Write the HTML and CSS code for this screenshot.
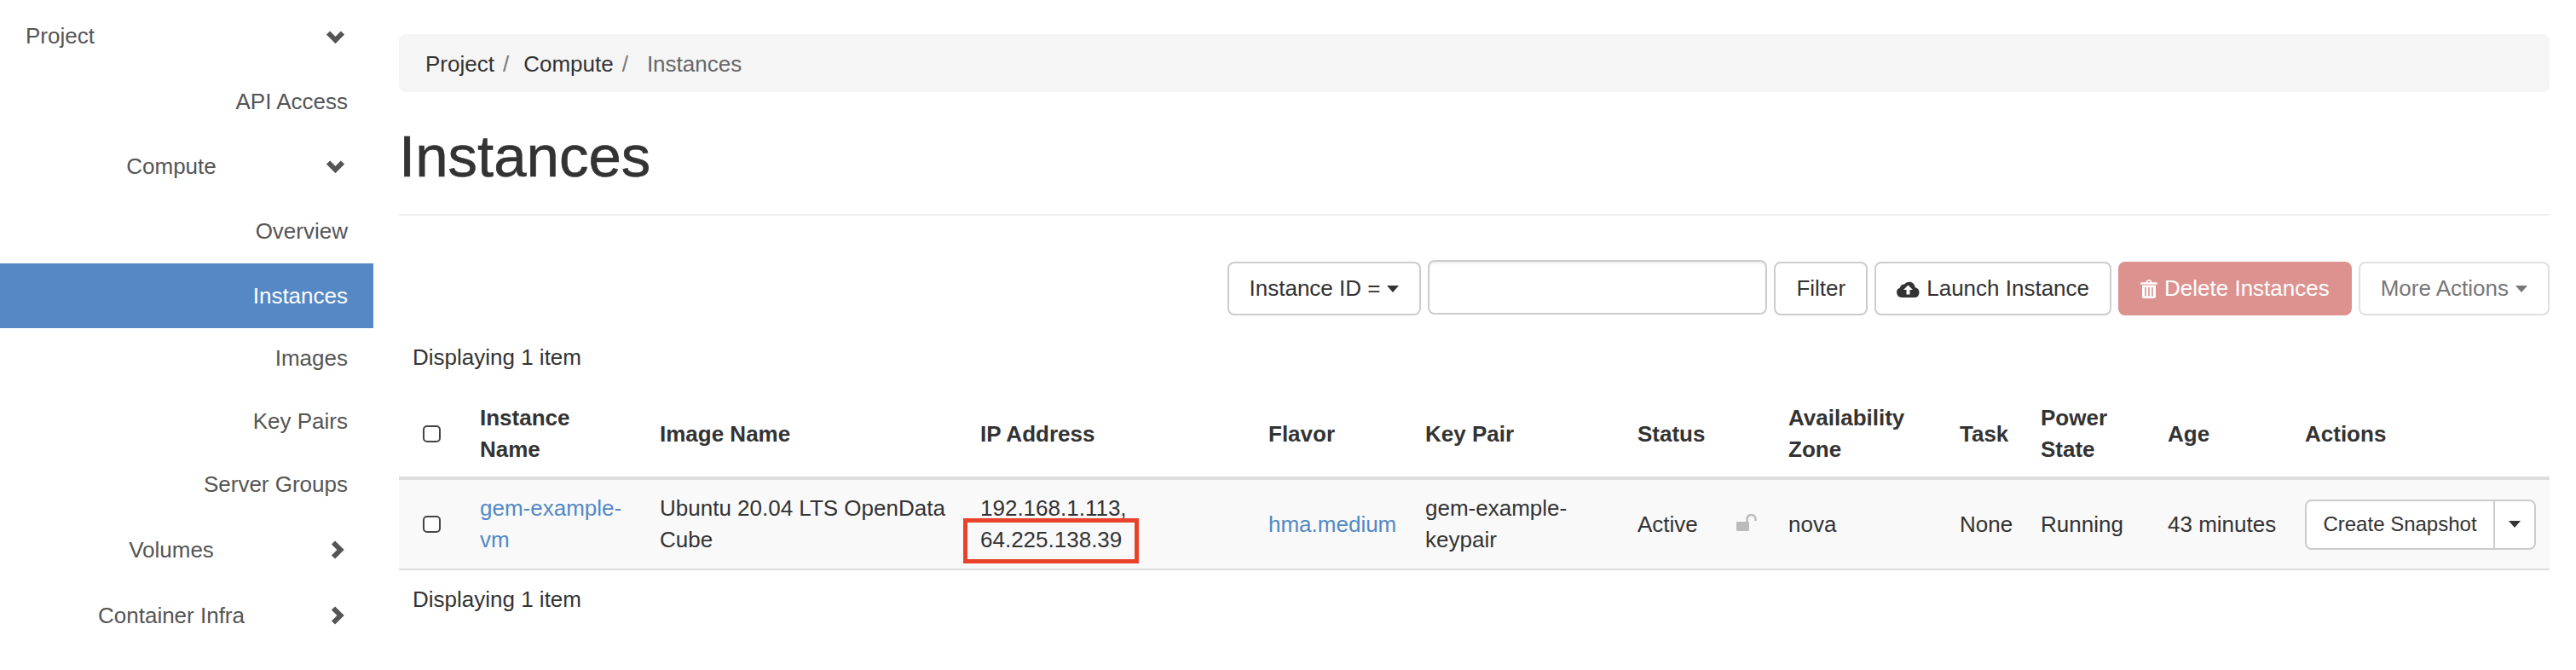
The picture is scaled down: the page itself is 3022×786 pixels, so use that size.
FILE: index.html
```html
<!DOCTYPE html>
<html lang="en">
<head>
    <meta charset="utf-8">
    <title>Instances</title>
    <link rel="stylesheet" href="styles.css">
</head>
<body>
    <div class="page">
        <nav class="sidebar">
            <a class="nav-item nav-top"><span class="nav-label">Project</span>
                <svg class="chev" viewBox="0 0 23 16"><path d="M3 3.500l8.500 8.500 8.500-8.500"/></svg></a>
            <a class="nav-item nav-end">API Access</a>
            <a class="nav-item nav-group"><span class="nav-label">Compute</span>
                <svg class="chev" viewBox="0 0 23 16"><path d="M3 3.500l8.500 8.500 8.500-8.500"/></svg></a>
            <a class="nav-item nav-end">Overview</a>
            <a class="nav-item nav-end active">Instances</a>
            <a class="nav-item nav-end nav-short">Images</a>
            <a class="nav-item nav-end nav-short">Key Pairs</a>
            <a class="nav-item nav-end nav-short">Server Groups</a>
            <a class="nav-item nav-group nav-volumes"><span class="nav-label">Volumes</span>
                <svg class="chev" viewBox="0 0 23 24"><path d="M9 3.500l8.500 8.500-8.500 8.500"/></svg></a>
            <a class="nav-item nav-group nav-container"><span class="nav-label">Container Infra</span>
                <svg class="chev" viewBox="0 0 23 24"><path d="M9 3.500l8.500 8.500-8.500 8.500"/></svg></a>
        </nav>

        <main class="content">
            <ol class="breadcrumb">
                <li>Project</li>
                <li class="sep sep-first">/</li>
                <li>Compute</li>
                <li class="sep sep-last">/</li>
                <li class="current">Instances</li>
            </ol>

            <h1 class="page-title">Instances</h1>

            <div class="toolbar">
                <button class="btn">Instance ID =<span class="caret"></span></button>
                <input class="filter-input" type="text">
                <button class="btn">Filter</button>
                <button class="btn">
                    <svg class="icon-cloud" viewBox="0 0 27 21"><path fill-rule="evenodd" d="M6 21a6 6 0 0 1-2-11.600A5 5 0 0 1 9 5.500A7 7 0 0 1 21.300 7.500a3.200 3.200 0 0 1 .4 1.700A6 6 0 0 1 21.500 21ZM13.500 6.500L19 12H15.500V17.500H11.500V12H8Z"/></svg>
                    Launch Instance</button>
                <button class="btn btn-danger">
                    <svg class="icon-trash" viewBox="0 0 20 22"><path fill-rule="evenodd" d="M1 3.200H6.200L7.600.8Q8 .2 8.800 .2H11.200Q12 .2 12.400 .8L13.800 3.200H19Q20 3.200 20 4V5.500H0V4Q0 3.200 1 3.200ZM8.200 3.200H11.800L11 1.800H9ZM2 6.500H18V20Q18 22 16 22H4Q2 22 2 20ZM5.200 9V19.500H6.800V9ZM9.200 9V19.500H10.800V9ZM13.200 9V19.500H14.800V9Z"/></svg>
                    Delete Instances</button>
                <button class="btn btn-muted">More Actions<span class="caret"></span></button>
            </div>

            <p class="item-count first">Displaying 1 item</p>

            <table class="instances">
                <colgroup>
                    <col class="c-check"><col class="c-name"><col class="c-image"><col class="c-ip">
                    <col class="c-flavor"><col class="c-key"><col class="c-status"><col class="c-zone">
                    <col class="c-task"><col class="c-power"><col class="c-age"><col class="c-actions">
                </colgroup>
                <thead>
                    <tr>
                        <th><span class="checkbox"></span></th>
                        <th>Instance Name</th>
                        <th>Image Name</th>
                        <th>IP Address</th>
                        <th>Flavor</th>
                        <th>Key Pair</th>
                        <th>Status</th>
                        <th>Availability Zone</th>
                        <th>Task</th>
                        <th>Power State</th>
                        <th>Age</th>
                        <th>Actions</th>
                    </tr>
                </thead>
                <tbody>
                    <tr>
                        <td><span class="checkbox"></span></td>
                        <td><a class="link">gem-example-vm</a></td>
                        <td>Ubuntu 20.04 LTS OpenData Cube</td>
                        <td class="ip-cell">192.168.1.113,<br>64.225.138.39<span class="callout"></span></td>
                        <td><a class="link">hma.medium</a></td>
                        <td>gem-example-keypair</td>
                        <td>
                            <div class="status">Active
                                <svg class="icon-lock" viewBox="0 0 25 20"><rect y="9" width="15" height="11" rx="1"/><path d="M12.500 9V6a5 5 0 0 1 10 0v2"/></svg>
                            </div>
                        </td>
                        <td>nova</td>
                        <td>None</td>
                        <td>Running</td>
                        <td class="nowrap">43 minutes</td>
                        <td>
                            <div class="btn-group">
                                <button class="btn-sm btn-main">Create Snapshot</button>
                                <button class="btn-sm btn-split"><span class="caret"></span></button>
                            </div>
                        </td>
                    </tr>
                </tbody>
            </table>

            <p class="item-count last">Displaying 1 item</p>
        </main>
    </div>
</body>
</html>
```

FILE: styles.css
```css
* {
    box-sizing: border-box;
}

html, body {
    height: 100%;
}

body {
    margin: 0;
    background: #fff;
    color: #333;
    font-family: "Liberation Sans", Arial, sans-serif;
    font-size: 26px;
    line-height: 37px;
    overflow: hidden;
}

.page {
    display: flex;
    height: 100%;
    border-top: 4px solid;
    border-image: linear-gradient(#fff 25%, #ccc 25%) 1;
}

/* sidebar */
.sidebar {
    width: 438px;
    flex-shrink: 0;
    color: #555;
}

.nav-item {
    display: flex;
    align-items: center;
    height: 76px;
    padding: 0 30px;
}

.nav-top {
    height: 77px;
}

.nav-end {
    justify-content: flex-end;
}

.nav-short {
    height: 74px;
}

.nav-group .nav-label {
    flex: 1;
    text-align: center;
}

.nav-top .nav-label {
    flex: 1;
}

.nav-volumes {
    margin-top: 2px;
}

.nav-container {
    margin-top: 1px;
}

.active {
    margin-bottom: -2px;
    background: #5588c4;
    color: #fff;
}

.chev {
    width: 23px;
    margin-left: 10px;
    margin-right: 3px;
    flex-shrink: 0;
    fill: none;
    stroke: #555;
    stroke-width: 6;
}

/* main column */
.content {
    flex: 1;
    min-width: 0;
    padding: 36px 31px 0 30px;
}

.breadcrumb {
    display: flex;
    align-items: center;
    height: 68px;
    margin: 0;
    padding: 3px 31px 0;
    list-style: none;
    background: #f5f5f5;
    border-radius: 8px;
}

.sep {
    margin-left: 10px;
    color: #777;
}

.sep-first {
    margin-right: 17px;
}

.sep-last {
    margin-right: 22px;
}

.current {
    color: #666;
}

.page-title {
    height: 145px;
    margin: 0;
    padding-top: 39px;
    border-bottom: 2px solid #eee;
    font-size: 69px;
    line-height: 74px;
    font-weight: 500;
    -webkit-text-stroke: .6px #333;
}

.toolbar {
    display: flex;
    justify-content: flex-end;
    align-items: center;
    gap: 8px;
    margin-top: 54px;
}

.btn {
    display: flex;
    align-items: center;
    height: 63px;
    padding: 0 24px;
    background: #fff;
    border: 2px solid #ccc;
    border-radius: 8px;
    color: #333;
    font: inherit;
}

.btn-danger {
    background: #dc938f;
    border-color: #dc938f;
    color: #fff;
}

.btn-muted {
    border-color: #e0e0e0;
    color: #777;
}

.caret {
    display: inline-block;
    width: 0;
    height: 0;
    border-top: 8px solid currentColor;
    border-left: 7.500px solid transparent;
    border-right: 7.500px solid transparent;
}

.btn .caret {
    margin-left: 8px;
}

.filter-input {
    width: 398px;
    height: 64px;
    margin-top: -3px;
    border: 2px solid #ccc;
    border-radius: 8px;
    box-shadow: inset 0 2px 2px rgba(0, 0, 0, .075);
}

.icon-cloud {
    width: 27px;
    height: 21px;
    margin-right: 8px;
    fill: #333;
}

.icon-trash {
    width: 20px;
    height: 22px;
    margin-right: 8px;
    fill: #fff;
}

.item-count {
    margin: 0;
    padding-left: 16px;
}

.item-count.first {
    margin-top: 31px;
}

.item-count.last {
    margin-top: 16px;
}

/* table */
.instances {
    width: 2523px;
    margin-top: 17px;
    table-layout: fixed;
    border-collapse: separate;
    border-spacing: 0;
}

.c-check { width: 80px; }
.c-name { width: 211px; }
.c-image { width: 376px; }
.c-ip { width: 338px; }
.c-flavor { width: 184px; }
.c-key { width: 249px; }
.c-status { width: 177px; }
.c-zone { width: 201px; }
.c-task { width: 95px; }
.c-power { width: 149px; }
.c-age { width: 161px; }
.c-actions { width: 302px; }

th, td {
    padding: 15px;
    text-align: left;
    vertical-align: middle;
}

th {
    padding-top: 17px;
    padding-bottom: 13px;
    border-bottom: 4px solid #ddd;
}

td {
    height: 106px;
    background: #f9f9f9;
    border-bottom: 2px solid #ddd;
}

.checkbox {
    display: block;
    width: 21px;
    height: 20px;
    margin-left: 13px;
    background: #fff;
    border: 2px solid #444;
    border-radius: 5px;
}

.link {
    color: #5288c6;
}

.nowrap {
    white-space: nowrap;
}

.ip-cell {
    position: relative;
}

/* red annotation drawn over the screenshot */
.callout {
    position: absolute;
    left: -5px;
    top: 45px;
    width: 206px;
    height: 53px;
    border: 5px solid #e8432a;
}

.status {
    display: flex;
    justify-content: space-between;
    align-items: center;
    padding-right: 6px;
}

.icon-lock {
    width: 25px;
    height: 20px;
    margin-top: -4px;
    fill: #bbb;
}

.icon-lock path {
    fill: none;
    stroke: #bbb;
    stroke-width: 2.500;
}

.btn-group {
    display: flex;
    width: 271px;
    height: 59px;
}

.btn-sm {
    display: flex;
    align-items: center;
    justify-content: center;
    height: 59px;
    background: #fff;
    border: 2px solid #ccc;
    color: #333;
    font-family: inherit;
    font-size: 24px;
}

.btn-main {
    width: 223px;
    padding: 0;
    border-radius: 8px 0 0 8px;
}

.btn-split {
    width: 48px;
    padding: 0;
    border-left: 0;
    border-radius: 0 8px 8px 0;
}
```
